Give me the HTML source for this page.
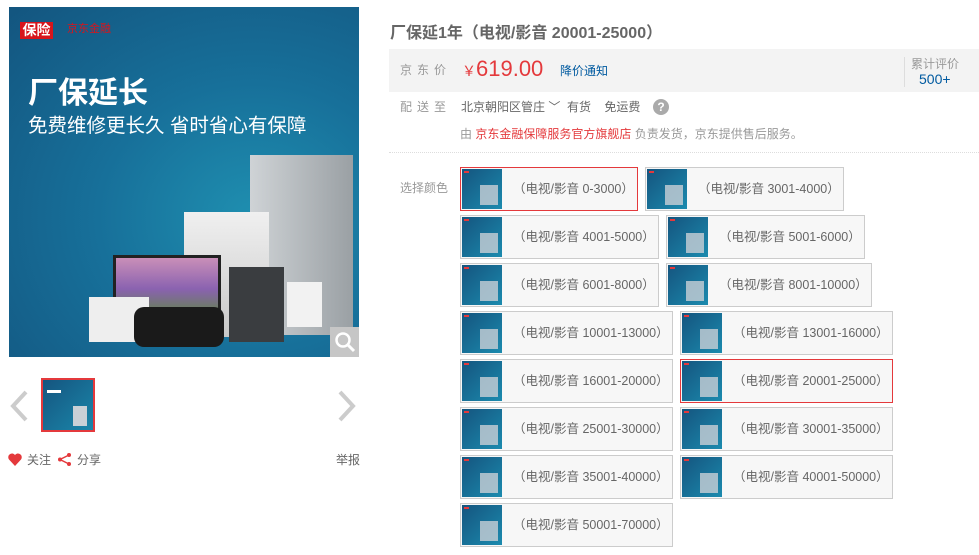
<!DOCTYPE html>
<html><head><meta charset="utf-8"><style>
*{margin:0;padding:0;box-sizing:border-box}
body{width:979px;height:555px;background:#fff;font-family:"Liberation Sans","Noto Sans CJK SC",sans-serif;font-size:12px;color:#666;position:relative;overflow:hidden}
.a{position:absolute}
.main{left:9px;top:7px;width:350px;height:350px;background:radial-gradient(ellipse at 70% 60%,#1f8fb0 0%,#17709a 45%,#13557f 100%);overflow:hidden}
.thumbimg{background:linear-gradient(135deg,#15557f,#1a86aa);position:absolute}
.opt{position:absolute;height:44px;border:1px solid #ccc;background:#f7f7f7;white-space:nowrap}
.opt.sel{border-color:#e4393c}
.opt .t{position:absolute;left:1px;top:1px;width:40px;height:40px;background:linear-gradient(135deg,#15557f,#1b8aae)}
.opt .t:after{content:"";position:absolute;left:18px;top:16px;width:18px;height:20px;background:#c9d0d6;opacity:.8}
.opt .t:before{content:"";position:absolute;left:2px;top:2px;width:5px;height:2px;background:#e4393c}
.opt span{position:absolute;left:52px;top:13px;font-size:12.5px;color:#666;line-height:16px}
</style></head><body>
<div class="a main">
 <div class="a" style="left:11px;top:15px;width:33px;height:17px;background:#d7151c;color:#fff;font-size:14px;font-weight:bold;line-height:17px;text-align:center">保险</div>
 <div class="a" style="left:58px;top:13px;color:#d7151c;font-size:11px">京东金融</div>
 <div class="a" style="left:19px;top:70px;color:#fff;font-size:30px;font-weight:bold;line-height:34px">厂保延长</div>
 <div class="a" style="left:19px;top:106px;color:#fff;font-size:19.5px;line-height:26px">免费维修更长久 省时省心有保障</div>
 <div class="a" style="left:241px;top:148px;width:103px;height:180px;background:linear-gradient(90deg,#cfd3d6,#9aa0a4)"></div>
 <div class="a" style="left:175px;top:205px;width:85px;height:125px;background:linear-gradient(#f0f0f0,#c8c8c8)"></div>
 <div class="a" style="left:104px;top:248px;width:108px;height:68px;background:linear-gradient(#c98fb8,#8a62b0 50%,#5b8a3a);border:3px solid #222"></div>
 <div class="a" style="left:220px;top:260px;width:55px;height:75px;background:#3a3d40"></div>
 <div class="a" style="left:278px;top:275px;width:35px;height:45px;background:#f2f2f2"></div>
 <div class="a" style="left:80px;top:290px;width:60px;height:45px;background:#eee"></div>
 <div class="a" style="left:125px;top:300px;width:90px;height:40px;background:#1a1a1a;border-radius:10px"></div>
 <div class="a" style="left:321px;top:320px;width:29px;height:30px;background:#c6c6c6"></div>
 <svg class="a" style="left:325px;top:324px" width="22" height="22" viewBox="0 0 22 22"><circle cx="9" cy="9" r="6.5" fill="none" stroke="#fff" stroke-width="2.5"/><path d="M14 14 L20 20" stroke="#fff" stroke-width="3"/></svg>
</div>
<svg class="a" style="left:9px;top:390px" width="20" height="32"><path d="M17 2 L4 16 L17 30" stroke="#ccc" stroke-width="4" fill="none"/></svg>
<svg class="a" style="left:337px;top:390px" width="20" height="32"><path d="M3 2 L16 16 L3 30" stroke="#ccc" stroke-width="4" fill="none"/></svg>
<div class="a" style="left:41px;top:378px;width:54px;height:54px;border:2px solid #e4393c"><div class="thumbimg" style="left:0;top:0;width:50px;height:50px"></div><div class="a" style="left:30px;top:26px;width:14px;height:20px;background:#c9d0d6"></div><div class="a" style="left:4px;top:10px;width:14px;height:3px;background:#fff"></div></div>
<svg class="a" style="left:8px;top:453px" width="14" height="13" viewBox="0 0 14 13"><path d="M7 13 L1 6.5 A3.3 3.3 0 0 1 7 2 A3.3 3.3 0 0 1 13 6.5 Z" fill="#e4393c"/></svg>
<div class="a" style="left:27px;top:451px;font-size:12px;color:#666">关注</div>
<svg class="a" style="left:57px;top:452px" width="15" height="15" viewBox="0 0 15 15"><circle cx="12" cy="3" r="2" fill="#e4393c"/><circle cx="3" cy="7.5" r="2" fill="#e4393c"/><circle cx="12" cy="12" r="2" fill="#e4393c"/><path d="M12 3 L3 7.5 L12 12" stroke="#e4393c" stroke-width="1.5" fill="none"/></svg>
<div class="a" style="left:77px;top:451px;font-size:12px;color:#666">分享</div>
<div class="a" style="left:336px;top:451px;font-size:12px;color:#666">举报</div>

<div class="a" style="left:390px;top:19px;font-size:16px;font-weight:bold;color:#666">厂保延1年（电视/影音 20001-25000）</div>
<div class="a" style="left:389px;top:49px;width:590px;height:43px;background:#f3f3f3"></div>
<div class="a" style="left:400px;top:61px;color:#999;letter-spacing:5px">京东价</div>
<div class="a" style="left:462px;top:55px;color:#e4393c;font-size:22px;line-height:28px"><span style="font-size:14px">￥</span>619.00</div>
<div class="a" style="left:560px;top:62px;color:#005aa0">降价通知</div>
<div class="a" style="left:904px;top:57px;width:1px;height:30px;background:#ddd"></div>
<div class="a" style="left:911px;top:55px;color:#999">累计评价</div>
<div class="a" style="left:919px;top:71px;color:#005aa0;font-size:14px">500+</div>
<div class="a" style="left:400px;top:98px;color:#999;letter-spacing:5px">配送至</div>
<div class="a" style="left:461px;top:98px;color:#666">北京朝阳区管庄 <span style="font-family:'DejaVu Sans'">﹀</span>&nbsp; 有货 &nbsp;&nbsp; 免运费</div>
<div class="a" style="left:653px;top:99px;width:16px;height:16px;border-radius:50%;background:#aaa;color:#fff;font-size:12px;font-weight:bold;text-align:center;line-height:16px">?</div>
<div class="a" style="left:460px;top:125px;color:#999">由 <span style="color:#e4393c">京东金融保障服务官方旗舰店</span> 负责发货，京东提供售后服务。</div>
<div class="a" style="left:389px;top:152px;width:590px;border-top:1px dotted #ddd"></div>
<div class="a" style="left:400px;top:179px;color:#999">选择颜色</div>

<div class="opt sel" style="left:460px;top:167px;width:178px"><div class="t"></div><span>（电视/影音 0-3000）</span></div>
<div class="opt" style="left:645px;top:167px;width:199px"><div class="t"></div><span>（电视/影音 3001-4000）</span></div>
<div class="opt" style="left:460px;top:215px;width:199px"><div class="t"></div><span>（电视/影音 4001-5000）</span></div>
<div class="opt" style="left:666px;top:215px;width:199px"><div class="t"></div><span>（电视/影音 5001-6000）</span></div>
<div class="opt" style="left:460px;top:263px;width:199px"><div class="t"></div><span>（电视/影音 6001-8000）</span></div>
<div class="opt" style="left:666px;top:263px;width:206px"><div class="t"></div><span>（电视/影音 8001-10000）</span></div>
<div class="opt" style="left:460px;top:311px;width:213px"><div class="t"></div><span>（电视/影音 10001-13000）</span></div>
<div class="opt" style="left:680px;top:311px;width:213px"><div class="t"></div><span>（电视/影音 13001-16000）</span></div>
<div class="opt" style="left:460px;top:359px;width:213px"><div class="t"></div><span>（电视/影音 16001-20000）</span></div>
<div class="opt sel" style="left:680px;top:359px;width:213px"><div class="t"></div><span>（电视/影音 20001-25000）</span></div>
<div class="opt" style="left:460px;top:407px;width:213px"><div class="t"></div><span>（电视/影音 25001-30000）</span></div>
<div class="opt" style="left:680px;top:407px;width:213px"><div class="t"></div><span>（电视/影音 30001-35000）</span></div>
<div class="opt" style="left:460px;top:455px;width:213px"><div class="t"></div><span>（电视/影音 35001-40000）</span></div>
<div class="opt" style="left:680px;top:455px;width:213px"><div class="t"></div><span>（电视/影音 40001-50000）</span></div>
<div class="opt" style="left:460px;top:503px;width:213px"><div class="t"></div><span>（电视/影音 50001-70000）</span></div>
</body></html>
